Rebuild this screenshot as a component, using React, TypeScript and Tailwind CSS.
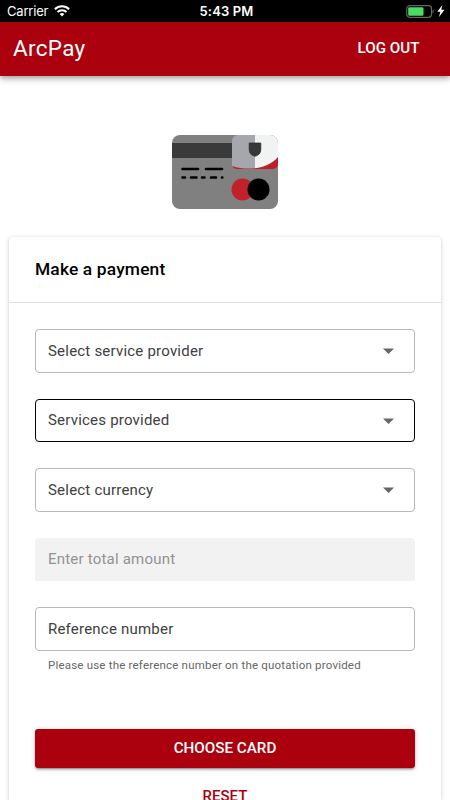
import React from 'react';

interface FieldProps {
  label: string;
  select?: boolean;
  active?: boolean;
  disabled?: boolean;
}

const StatusBar: React.FC = () => (
  <div className="h-[22px] shrink-0 bg-black text-white flex items-center justify-between pl-[7px] pr-[5px] font-[Inter,sans-serif] text-[13px]">
    <div className="flex flex-1 items-center gap-[6px]">
      <span className="tracking-[-0.2px] pt-px">Carrier</span>
      <svg width="16" height="12" viewBox="0 0 16 12" fill="none" stroke="white" strokeWidth="2">
        <path d="M.9 4.2a10 10 0 0 1 14.2 0" />
        <path d="M3.5 7a6.4 6.4 0 0 1 9 0" />
        <path d="M8 11.6 5.6 9.1a3.4 3.4 0 0 1 4.8 0Z" fill="white" stroke="none" />
      </svg>
    </div>
    <span className="font-semibold tracking-[0.15px] pt-px pl-px">5:43 PM</span>
    <div className="flex flex-1 items-center justify-end gap-[3px]">
      <svg width="29" height="13" viewBox="0 0 29 13">
        <rect x="1.7" y=".7" width="24.8" height="11.6" rx="3" fill="none" stroke="#666" strokeWidth="1.2" />
        <rect x="3.2" y="2.2" width="15.3" height="8.6" rx="1.2" fill="#4cd964" />
        <path d="M27.6 4.3c1.5.8 1.5 3.6 0 4.4Z" fill="#666" />
      </svg>
      <svg width="8" height="12" viewBox="0 0 8 12">
        <path d="M5.3 0 .3 6.8h3L2 12l5.5-7.2H4.3Z" fill="white" />
      </svg>
    </div>
  </div>
);

const CardIllustration: React.FC = () => (
  <svg width="106" height="74" viewBox="0 0 106 74">
    <rect width="106" height="74" rx="8" fill="#808080" />
    <path d="M0 8h62v15H0Z" fill="#3a3a3a" />
    <g stroke="black" strokeWidth="2.6" strokeLinecap="round">
      <path d="M10.5 34h15.5M34 34h16" />
      <path d="M10.5 42.5h2.5M19 42.5h5.5M30 42.5h2.5M39 42.5h5M50 42.5h.3" />
    </g>
    <circle cx="70.5" cy="54.5" r="11" fill="#c2212a" />
    <circle cx="86.5" cy="54.5" r="11" fill="black" />
    <path d="M60 29l46-12v12a5 5 0 0 1-5 5H65a5 5 0 0 1-5-5Z" fill="#be1e27" />
    <path d="M60 6a6 6 0 0 1 6-6h17v33.3c-8 .8-16 0-23-2.3Z" fill="#a6a7ac" />
    <path d="M83 0h15a8 8 0 0 1 8 8v14c-6 7-14 10-23 11.3Z" fill="#f1f2f2" />
    <path d="M77.2 8h11.6v6.5c0 3.7-2 5.8-5.8 6.8-3.8-1-5.8-3.1-5.8-6.8Z" fill="#383838" stroke="#262626" strokeWidth=".7" />
  </svg>
);

const Field: React.FC<FieldProps> = ({ label, select, active, disabled }) => {
  const look = disabled
    ? 'rounded-t-[4px] border-transparent bg-[#f2f2f2] text-[#929292]'
    : active
      ? 'rounded-[4px] border-black text-[#404040]'
      : 'rounded-[4px] border-[#b8b8b8] text-[#404040]';

  return (
    <div className={`h-[43.5px] border pl-3 pr-5 flex items-center justify-between ${look}`}>
      <span className="text-[15px] tracking-[0.21px]">{label}</span>
      {select && (
        <svg width="11" height="6" viewBox="0 0 11 6">
          <path d="M0 .5h11L5.5 6Z" fill="#666" />
        </svg>
      )}
    </div>
  );
};

const App: React.FC = () => {
  return (
    <div className="h-[800px] overflow-hidden bg-white flex flex-col font-[Roboto,sans-serif]">
      <StatusBar />

      <header className="relative h-[54px] shrink-0 bg-[#ab000d] text-white flex items-center justify-between pl-[13px] pr-[30.5px] shadow-[0_2px_4px_-1px_rgba(0,0,0,0.2),0_4px_5px_rgba(0,0,0,0.14),0_1px_10px_rgba(0,0,0,0.12)]">
        <h1 className="text-[22.5px] tracking-[0.3px] pb-px">ArcPay</h1>
        <button className="text-[15.2px] font-medium pb-px">LOG OUT</button>
      </header>

      <div className="h-[161px] shrink-0 pt-[59px] flex justify-center items-start">
        <CardIllustration />
      </div>

      <main className="mx-[9px] flex-1 min-h-0 rounded-t-[4px] shadow-[0_2px_1px_-1px_rgba(0,0,0,0.2),0_1px_1px_rgba(0,0,0,0.14),0_1px_4px_rgba(0,0,0,0.2)]">
        <h2 className="h-[66px] border-b border-[#e0e0e0] px-[26px] flex items-center text-[17.4px] font-medium tracking-[0.15px] text-black">
          Make a payment
        </h2>

        <form className="px-[26px] pt-[26.4px] flex flex-col">
          <div className="flex flex-col gap-[26px]">
            <Field label="Select service provider" select />
            <Field label="Services provided" select active />
            <Field label="Select currency" select />
            <Field label="Enter total amount" disabled />
            <Field label="Reference number" />
          </div>
          <p className="pl-[13px] pt-[5px] h-[78.5px] text-[11.5px] leading-[18px] tracking-[0.2px] text-[#666]">
            Please use the reference number on the quotation provided
          </p>
          <button
            type="button"
            className="h-[39px] rounded-[3px] bg-[#ab000d] text-white text-[15.2px] font-medium shadow-[0_3px_1px_-2px_rgba(0,0,0,0.2),0_2px_2px_rgba(0,0,0,0.14),0_1px_5px_rgba(0,0,0,0.2)]"
          >
            CHOOSE CARD
          </button>
          <button type="button" className="mt-[9px] h-[38px] text-[#ab000d] text-[15px] font-medium">
            RESET
          </button>
        </form>
      </main>
    </div>
  );
};

export default App;
